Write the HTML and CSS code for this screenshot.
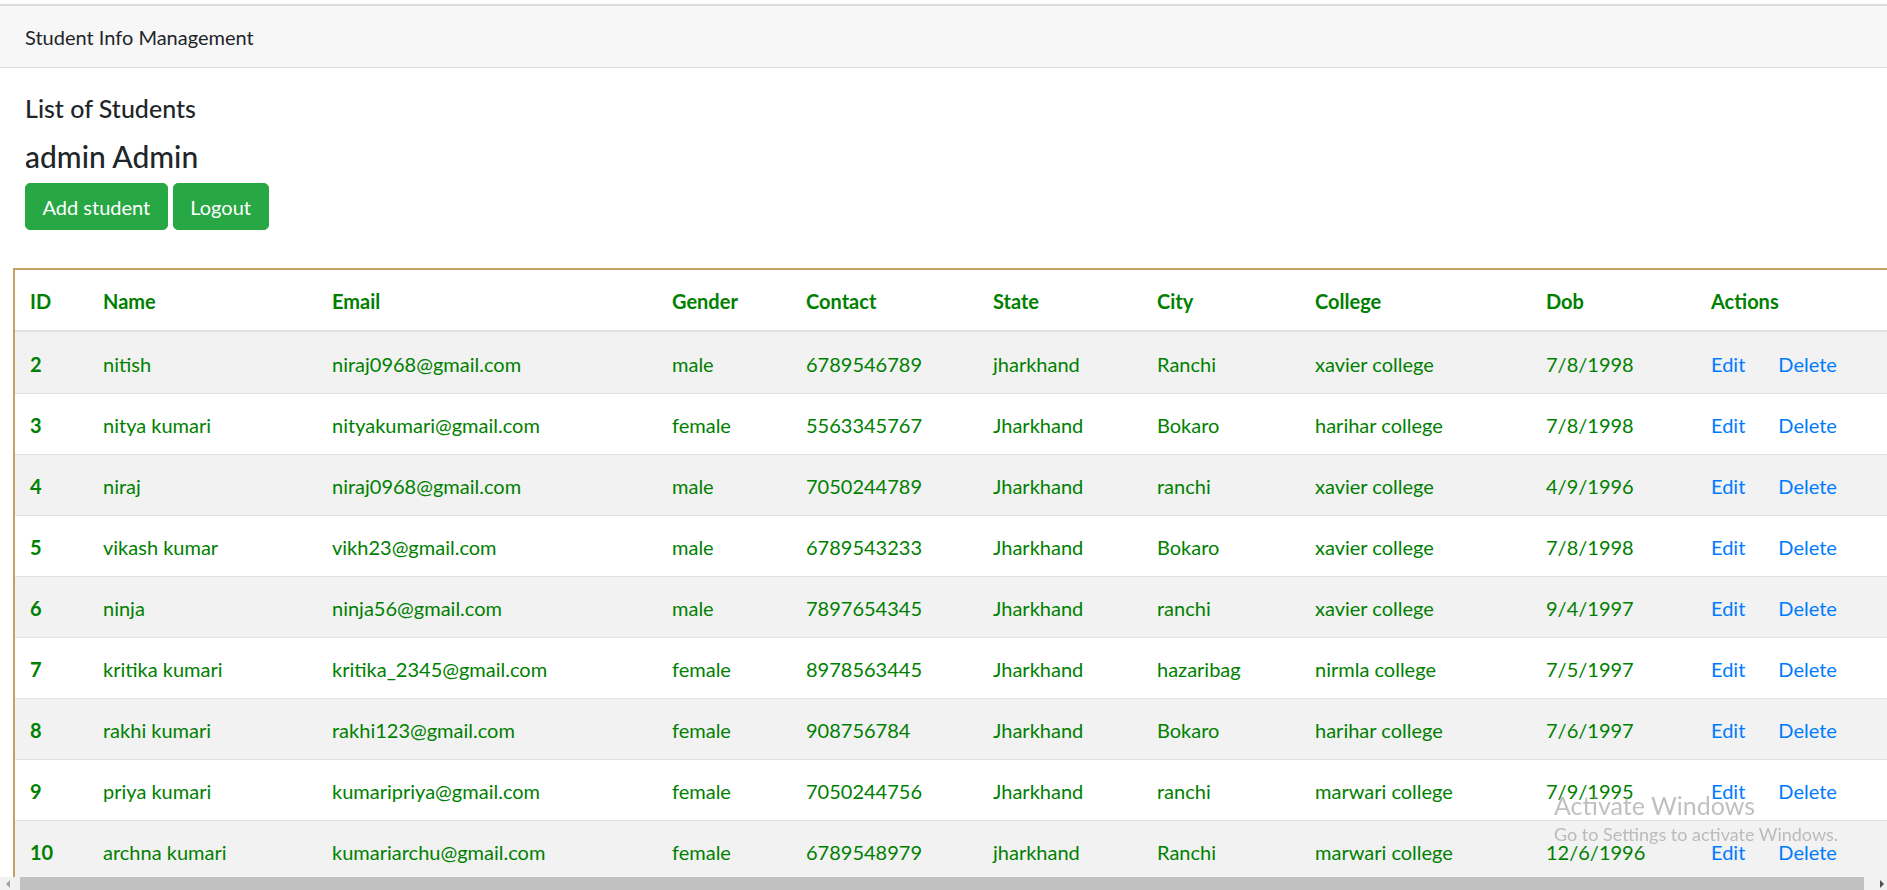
FILE: index.html
```html
<!DOCTYPE html>
<html lang="en">
<head>
<meta charset="utf-8">
<title>Student Info Management</title>
<link rel="stylesheet" href="styles.css">
</head>
<body>
<nav class="navbar"><span class="brand">Student Info Management</span></nav>
<main class="content">
  <section class="intro">
    <h5 class="title">List of Students</h5>
    <h4 class="user">admin Admin</h4>
    <div class="actions">
      <a class="btn" href="#">Add student</a>
      <a class="btn" href="#">Logout</a>
    </div>
  </section>
  <div class="table-wrap">
    <table class="students">
      <colgroup>
        <col class="c-id"><col class="c-name"><col class="c-email"><col class="c-gender"><col class="c-contact">
        <col class="c-state"><col class="c-city"><col class="c-college"><col class="c-dob"><col class="c-actions">
      </colgroup>
      <thead>
        <tr><th>ID</th><th>Name</th><th>Email</th><th>Gender</th><th>Contact</th><th>State</th><th>City</th><th>College</th><th>Dob</th><th>Actions</th></tr>
      </thead>
      <tbody>
        <tr><td class="id">2</td><td>nitish</td><td>niraj0968@gmail.com</td><td>male</td><td>6789546789</td><td>jharkhand</td><td>Ranchi</td><td>xavier college</td><td>7/8/1998</td><td><a class="link" href="#">Edit</a><a class="link" href="#">Delete</a></td></tr>
        <tr><td class="id">3</td><td>nitya kumari</td><td>nityakumari@gmail.com</td><td>female</td><td>5563345767</td><td>Jharkhand</td><td>Bokaro</td><td>harihar college</td><td>7/8/1998</td><td><a class="link" href="#">Edit</a><a class="link" href="#">Delete</a></td></tr>
        <tr><td class="id">4</td><td>niraj</td><td>niraj0968@gmail.com</td><td>male</td><td>7050244789</td><td>Jharkhand</td><td>ranchi</td><td>xavier college</td><td>4/9/1996</td><td><a class="link" href="#">Edit</a><a class="link" href="#">Delete</a></td></tr>
        <tr><td class="id">5</td><td>vikash kumar</td><td>vikh23@gmail.com</td><td>male</td><td>6789543233</td><td>Jharkhand</td><td>Bokaro</td><td>xavier college</td><td>7/8/1998</td><td><a class="link" href="#">Edit</a><a class="link" href="#">Delete</a></td></tr>
        <tr><td class="id">6</td><td>ninja</td><td>ninja56@gmail.com</td><td>male</td><td>7897654345</td><td>Jharkhand</td><td>ranchi</td><td>xavier college</td><td>9/4/1997</td><td><a class="link" href="#">Edit</a><a class="link" href="#">Delete</a></td></tr>
        <tr><td class="id">7</td><td>kritika kumari</td><td>kritika_2345@gmail.com</td><td>female</td><td>8978563445</td><td>Jharkhand</td><td>hazaribag</td><td>nirmla college</td><td>7/5/1997</td><td><a class="link" href="#">Edit</a><a class="link" href="#">Delete</a></td></tr>
        <tr><td class="id">8</td><td>rakhi kumari</td><td>rakhi123@gmail.com</td><td>female</td><td>908756784</td><td>Jharkhand</td><td>Bokaro</td><td>harihar college</td><td>7/6/1997</td><td><a class="link" href="#">Edit</a><a class="link" href="#">Delete</a></td></tr>
        <tr><td class="id">9</td><td>priya kumari</td><td>kumaripriya@gmail.com</td><td>female</td><td>7050244756</td><td>Jharkhand</td><td>ranchi</td><td>marwari college</td><td>7/9/1995</td><td><a class="link" href="#">Edit</a><a class="link" href="#">Delete</a></td></tr>
        <tr><td class="id">10</td><td>archna kumari</td><td>kumariarchu@gmail.com</td><td>female</td><td>6789548979</td><td>jharkhand</td><td>Ranchi</td><td>marwari college</td><td>12/6/1996</td><td><a class="link" href="#">Edit</a><a class="link" href="#">Delete</a></td></tr>
      </tbody>
    </table>
  </div>
</main>
<div class="hscroll">
  <span class="arrow-left"></span>
  <span class="thumb"></span>
  <span class="arrow-right"></span>
</div>
<div class="watermark">
  <div class="wm-title">Activate Windows</div>
  <div class="wm-sub">Go to Settings to activate Windows.</div>
</div>
</body>
</html>
```
FILE: styles.css
```css
* { box-sizing: border-box; }
html { overflow: hidden; }
body {
  margin: 0;
  font-family: Lato, "Liberation Sans", sans-serif;
  font-size: 20px;
  line-height: 1.5;
  color: #212529;
  background: #fff;
}
.navbar {
  margin-top: 4px;
  height: 64px;
  border-top: 2px solid #dcdcdc;
  border-bottom: 1px solid #dcdcdc;
  background: #f7f7f7;
  display: flex;
  align-items: center;
  padding: 1px 25px 0;
}
.brand { font-size: 20px; line-height: 30px; color: #212529; }
.intro { padding: 25px 25px 0; }
.title { margin: 0 0 15px; font-size: 25px; font-weight: 500; line-height: 1.2; }
.user { margin: 0 0 9px; font-size: 30px; font-weight: 500; line-height: 1.2; }
.actions { display: flex; gap: 5px; }
.btn {
  display: inline-block;
  padding: 7.5px 16.5px;
  font-size: 20px;
  line-height: 30px;
  color: #fff;
  background: #28a745;
  border: 1px solid #28a745;
  border-radius: 5px;
  text-decoration: none;
}
.table-wrap { padding: 38px 0 0 13px; }
.students {
  border-collapse: separate;
  border-spacing: 0;
  table-layout: fixed;
  width: 1889px;
  border: 2px solid #c9a063;
  color: #008000;
}
.c-id { width: 73px; }
.c-name { width: 229px; }
.c-email { width: 340px; }
.c-gender { width: 134px; }
.c-contact { width: 187px; }
.c-state { width: 164px; }
.c-city { width: 158px; }
.c-college { width: 231px; }
.c-dob { width: 165px; }
.c-actions { width: 204px; }
.students th, .students td {
  padding: 16px 15px 14px;
  text-align: left;
  vertical-align: top;
  line-height: 30px;
  white-space: nowrap;
}
.students th { font-weight: 700; border-bottom: 2px solid #dee2e6; }
.students td { border-top: 1px solid #dee2e6; }
.students tbody tr:first-child td { border-top-color: transparent; }
.students tbody tr:nth-child(odd) { background: #f2f2f2; }
.students td.id { font-weight: 700; }
.link { color: #007bff; text-decoration: none; }
.link + .link { margin-left: 33px; }
.hscroll {
  position: fixed;
  left: 0;
  right: 0;
  bottom: 0;
  height: 13px;
  background: #f1f1f1;
}
.thumb {
  position: absolute;
  left: 20px;
  width: 1844px;
  top: 0;
  bottom: 0;
  background: #c1c1c1;
}
.arrow-left {
  position: absolute;
  left: 6px;
  top: 3px;
  border-style: solid;
  border-width: 4px 4px 4px 0;
  border-color: transparent #a3a3a3 transparent transparent;
}
.arrow-right {
  position: absolute;
  right: 3px;
  top: 3px;
  border-style: solid;
  border-width: 4px 0 4px 4px;
  border-color: transparent transparent transparent #505050;
}
.watermark {
  position: fixed;
  left: 1554px;
  top: 790px;
  color: rgba(150, 150, 150, 0.6);
  pointer-events: none;
}
.wm-title { font-size: 25px; line-height: 30px; }
.wm-sub { margin-top: 3px; font-size: 18px; line-height: 22px; }
```
